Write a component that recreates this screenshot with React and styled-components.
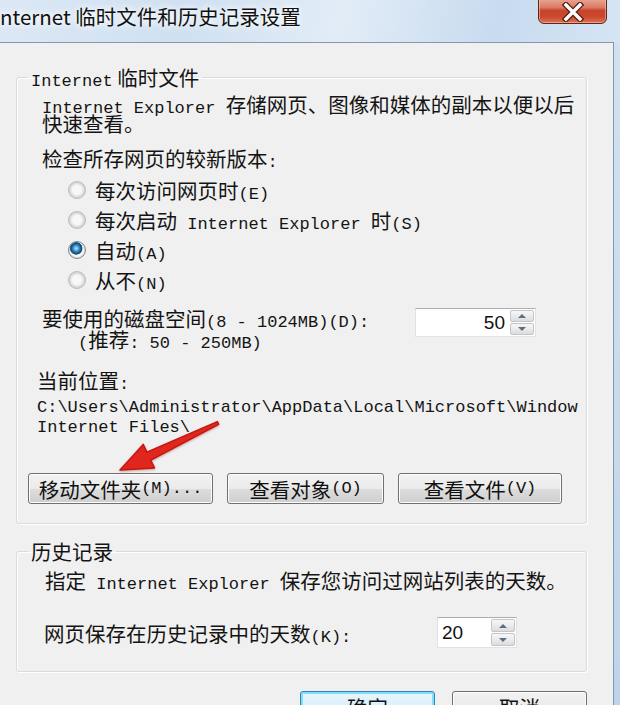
import React from "react";
import styled, { createGlobalStyle } from "styled-components";

const CJK = `"Noto Sans CJK SC", "Noto Sans", sans-serif`;

const GlobalStyle = createGlobalStyle`
  html, body {
    margin: 0;
    padding: 0;
  }
  body {
    width: 620px;
    height: 705px;
    overflow: hidden;
    background: #c9dbee;
  }
`;

const App = () => {
  return (
    <>
      <GlobalStyle />
      <Window>
        <TitleBar>
          <Title>Internet 临时文件和历史记录设置</Title>
          <CloseButton>
            <svg width="26" height="20" viewBox="0 0 26 20">
              <path d="M6 3 L20 17 M20 3 L6 17" stroke="#5a1c10" strokeWidth="6" strokeLinecap="square" />
              <path d="M6 3 L20 17 M20 3 L6 17" stroke="#fff" strokeWidth="3.4" strokeLinecap="square" />
            </svg>
          </CloseButton>
        </TitleBar>

        <Body>
          <GroupBox $pb={19}>
            <Legend>
              <Latin>Internet</Latin> 临时文件
            </Legend>
            <Line $mt={7} $indent={25} $lh={19}>
              <Latin>Internet Explorer </Latin>存储网页、图像和媒体的副本以便以后
              <br />
              快速查看。
            </Line>
            <Line $mt={15} $indent={25}>
              检查所存网页的较新版本<Latin>:</Latin>
            </Line>
            <RadioList>
              <RadioRow>
                <RadioDot />
                <span>
                  每次访问网页时<Latin>(E)</Latin>
                </span>
              </RadioRow>
              <RadioRow>
                <RadioDot />
                <span>
                  每次启动<Latin> Internet Explorer </Latin>时<Latin>(S)</Latin>
                </span>
              </RadioRow>
              <RadioRow>
                <RadioDot $checked />
                <span>
                  自动<Latin>(A)</Latin>
                </span>
              </RadioRow>
              <RadioRow>
                <RadioDot />
                <span>
                  从不<Latin>(N)</Latin>
                </span>
              </RadioRow>
            </RadioList>

            <DiskRow>
              <DiskLabel>
                <div>
                  要使用的磁盘空间<Latin>(8 - 1024MB)(D):</Latin>
                </div>
                <Sub>
                  <Latin>(</Latin>推荐<Latin>: 50 - 250MB)</Latin>
                </Sub>
              </DiskLabel>
              <Spinner $w={121} $h={29} $mr={50}>
                <SpinValue $align="right" $h={27}>50</SpinValue>
                <SpinButtons>
                  <SpinBtn>
                    <Arrow $up />
                  </SpinBtn>
                  <SpinBtn>
                    <Arrow />
                  </SpinBtn>
                </SpinButtons>
              </Spinner>
            </DiskRow>

            <Line $mt={20} $indent={20}>
              当前位置<Latin>:</Latin>
            </Line>
            <Line $mt={3} $indent={20}>
              <Latin>C:\Users\Administrator\AppData\Local\Microsoft\Window</Latin>
              <br />
              <Latin>Internet Files\</Latin>
            </Line>

            <ButtonRow $mt={40} $indent={11} $gap={14}>
              <Button $w={185}>
                移动文件夹<Latin>(M)...</Latin>
              </Button>
              <Button $w={157}>
                查看对象<Latin>(O)</Latin>
              </Button>
              <Button $w={164}>
                查看文件<Latin>(V)</Latin>
              </Button>
            </ButtonRow>
          </GroupBox>

          <GroupBox $pb={23} $mt={16}>
            <Legend>历史记录</Legend>
            <Line $mt={8} $indent={28}>
              指定<Latin> Internet Explorer </Latin>保存您访问过网站列表的天数。
            </Line>
            <DaysRow>
              <span>
                网页保存在历史记录中的天数<Latin>(K):</Latin>
              </span>
              <Spinner $w={80} $h={31} $mr={69}>
                <SpinValue $align="left" $h={29}>20</SpinValue>
                <SpinButtons>
                  <SpinBtn>
                    <Arrow $up />
                  </SpinBtn>
                  <SpinBtn>
                    <Arrow />
                  </SpinBtn>
                </SpinButtons>
              </Spinner>
            </DaysRow>
          </GroupBox>

          <BottomRow>
            <Button $w={135} $primary>
              确定
            </Button>
            <Button $w={135}>取消</Button>
          </BottomRow>

          <ArrowMark width="260" height="460" viewBox="0 0 260 460">
            <polygon
              points="218.6,381.4 150.8,417.2 154.5,424.9 120,427 143.2,401.4 146.9,409.1 217.4,378.6"
              fill="#e0261d"
              stroke="#c21810"
              strokeWidth="1.5"
              strokeLinejoin="round"
            />
          </ArrowMark>
        </Body>
      </Window>
    </>
  );
};

const Window = styled.div`
  width: 620px;
  height: 705px;
  display: flex;
  flex-direction: column;
  overflow: hidden;
  background: linear-gradient(180deg, #d3e2f2 0%, #c7daee 60%, #bfd4ea 100%);
  font-family: ${CJK};
  font-size: 20.5px;
  color: #141414;
`;

const TitleBar = styled.div`
  height: 42px;
  flex-shrink: 0;
  display: flex;
  justify-content: space-between;
  align-items: flex-start;
  background: linear-gradient(
    100deg,
    #dce8f5 0%,
    #cfe0f1 30%,
    #e2ecf7 55%,
    #c8dbef 80%,
    #d6e4f3 100%
  );
`;

const Title = styled.div`
  margin-left: -6px;
  margin-top: 3px;
  line-height: 26px;
  font-size: 20.5px;
  white-space: nowrap;
  color: #111;
  text-shadow: 0 0 6px #fff, 0 0 10px #fff;
`;

const CloseButton = styled.div`
  width: 69px;
  height: 28px;
  margin-top: -4px;
  margin-right: 13px;
  box-sizing: border-box;
  border: 1px solid #5e2619;
  border-radius: 0 0 6px 6px;
  background: linear-gradient(
    180deg,
    #eab1a3 0%,
    #dc7b63 40%,
    #c7452c 52%,
    #c9482e 75%,
    #de7152 100%
  );
  box-shadow: inset 0 0 0 1px rgba(255, 220, 210, 0.45);
  display: flex;
  align-items: center;
  justify-content: center;
  padding-top: 3px;
`;

const Body = styled.div`
  position: relative;
  flex: 1;
  margin-right: 6px;
  display: flex;
  flex-direction: column;
  padding: 23px 26px 0 16px;
  background: #f0f0f0;
  border-top: 1px solid #8398ae;
  border-right: 1px solid #8398ae;
`;

const GroupBox = styled.fieldset`
  margin: ${(p) => p.$mt || 0}px 0 0 0;
  min-width: 0;
  padding: 0 0 ${(p) => p.$pb}px 0;
  border: 1px solid #d5dbe0;
  border-radius: 3px;
  box-shadow: inset 1px 1px 0 #fff, 1px 1px 0 #fff;
`;

const Legend = styled.legend`
  margin-left: 11px;
  padding: 0 3px;
  line-height: 22px;
  white-space: nowrap;
`;

/* half-width text; line-height 0 keeps it from growing the CJK line box */
const Latin = styled.span`
  font-family: "Liberation Mono", "DejaVu Sans Mono", monospace;
  font-size: 17px;
  line-height: 0;
`;

const Line = styled.div`
  margin-top: ${(p) => p.$mt}px;
  margin-left: ${(p) => p.$indent}px;
  line-height: ${(p) => p.$lh || 20}px;
  white-space: nowrap;
`;

const RadioList = styled.div`
  margin-top: 7px;
  margin-left: 51px;
  display: flex;
  flex-direction: column;
`;

const RadioRow = styled.div`
  height: 30px;
  display: flex;
  align-items: center;
  gap: 9px;
  line-height: 20px;
  white-space: nowrap;
`;

const RadioDot = styled.span`
  width: 18px;
  height: 18px;
  flex-shrink: 0;
  box-sizing: border-box;
  border-radius: 50%;
  border: 1px solid ${(p) => (p.$checked ? "#7a8a99" : "#b9bcbf")};
  background: ${(p) =>
    p.$checked
      ? "radial-gradient(circle at 45% 40%, #b6ecff 0, #3d93c8 22%, #134d78 40%, #2d5f84 46%, transparent 50%), radial-gradient(circle, #f6f6f6 0 55%, #d4d4d4 75%, #eeeeee 100%)"
      : "radial-gradient(circle, #f7f7f7 0 40%, #e3e3e3 55%, #cfcfcf 72%, #ececec 100%)"};
`;

const DiskRow = styled.div`
  margin-top: 13px;
  margin-left: 25px;
  display: flex;
  align-items: flex-start;
`;

const DiskLabel = styled.div`
  flex: 1;
  line-height: 21px;
  white-space: nowrap;
`;

const Sub = styled.div`
  margin-left: 36px;
`;

const Spinner = styled.div`
  width: ${(p) => p.$w}px;
  height: ${(p) => p.$h}px;
  margin-right: ${(p) => p.$mr}px;
  box-sizing: border-box;
  display: flex;
  background: #fff;
  border: 1px solid #dfe3e8;
  border-top-color: #abadb3;
`;

const SpinValue = styled.div`
  flex: 1;
  padding: 0 4px;
  text-align: ${(p) => p.$align};
  font-family: "Liberation Sans", Arial, sans-serif;
  font-size: 19px;
  line-height: ${(p) => p.$h}px;
  color: #111;
`;

const SpinButtons = styled.div`
  width: 24px;
  display: flex;
  flex-direction: column;
  gap: 1px;
  padding: 1px;
  background: #fff;
`;

const SpinBtn = styled.div`
  flex: 1;
  display: flex;
  align-items: center;
  justify-content: center;
  box-sizing: border-box;
  border: 1px solid #c2c5ca;
  border-radius: 2px;
  background: linear-gradient(180deg, #f7f7f7 0%, #ebebeb 50%, #dcdcdc 100%);
`;

const Arrow = styled.span`
  width: 0;
  height: 0;
  border-left: 4px solid transparent;
  border-right: 4px solid transparent;
  ${(p) =>
    p.$up ? "border-bottom: 4px solid #5a6f86;" : "border-top: 4px solid #5a6f86;"}
`;

const ButtonRow = styled.div`
  margin-top: ${(p) => p.$mt}px;
  margin-left: ${(p) => p.$indent}px;
  display: flex;
  gap: ${(p) => p.$gap}px;
`;

const Button = styled.div`
  width: ${(p) => p.$w}px;
  height: 31px;
  box-sizing: border-box;
  display: flex;
  align-items: center;
  justify-content: center;
  line-height: 20px;
  white-space: nowrap;
  border: 1px solid ${(p) => (p.$primary ? "#3c7fb1" : "#707070")};
  border-radius: 3px;
  background: ${(p) =>
    p.$primary
      ? "linear-gradient(180deg, #eaf6fd 0%, #d9f0fc 50%, #bee6fd 50%, #a7d9f5 100%)"
      : "linear-gradient(180deg, #f2f2f2 0%, #ebebeb 50%, #dddddd 50%, #cfcfcf 100%)"};
  box-shadow: ${(p) =>
    p.$primary ? "inset 0 0 0 2px #7ee0fa" : "inset 0 0 0 1px #fcfcfc"};
  color: #111;
`;

const DaysRow = styled.div`
  margin-top: 27px;
  margin-left: 27px;
  height: 31px;
  display: flex;
  align-items: center;
  justify-content: space-between;
  line-height: 20px;
  white-space: nowrap;
`;

const BottomRow = styled.div`
  margin-top: 19px;
  display: flex;
  justify-content: flex-end;
  gap: 17px;
`;

const ArrowMark = styled.svg`
  position: absolute;
  left: 0;
  top: 0;
  pointer-events: none;
  filter: drop-shadow(0 1px 1px rgba(120, 0, 0, 0.35));
`;

export default App;
